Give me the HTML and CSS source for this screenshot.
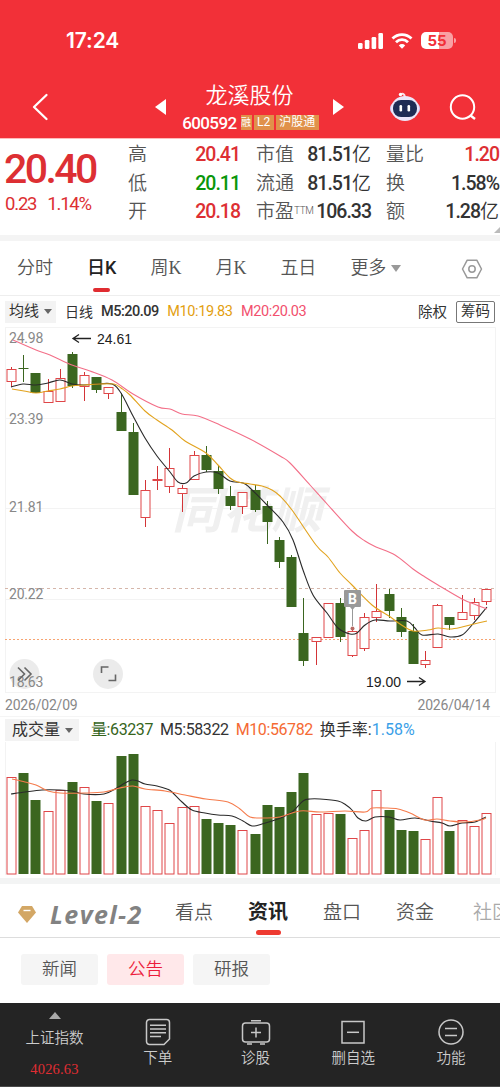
FILE: index.html
```
<!DOCTYPE html>
<html lang="zh-CN">
<head>
  <meta charset="UTF-8" />
  <meta name="viewport" content="width=device-width, initial-scale=1.0"/>
  <title>龙溪股份 600592</title>
  <link rel="stylesheet" href="styles.css">
</head>
<body>
  <header>
    <div class="status">
      <span class="time">17:24</span>
      <div class="status-icons">
        <svg width="26" height="16" viewBox="0 0 26 16" fill="#fff">
          <rect x="0" y="10" width="4.6" height="6" rx="1.3"/>
          <rect x="6.8" y="7" width="4.6" height="9" rx="1.3"/>
          <rect x="13.6" y="4" width="4.6" height="12" rx="1.3"/>
          <rect x="20.4" y="0" width="4.6" height="16" rx="1.3"/>
        </svg>
        <svg class="wifi" width="22" height="16" viewBox="0 0 22 16" fill="none" stroke="#fff" stroke-width="2.8">
          <path d="M1.5 5.5a13.4 13.4 0 0 1 19 0"/>
          <path d="M5 9.2a8.5 8.5 0 0 1 12 0"/>
          <path d="M11 15.8l-3.2-3.4a4.6 4.6 0 0 1 6.4 0z" fill="#fff" stroke="none"/>
        </svg>
        <span class="battery">55</span>
      </div>
    </div>
    <div class="titlebar">
      <svg class="back" width="18" height="28" viewBox="0 0 18 28" fill="none" stroke="#fff" stroke-width="2.3" stroke-linecap="round" stroke-linejoin="round"><path d="M14.5 2L2 14l12.500 12"/></svg>
      <svg class="prev" width="11" height="16" viewBox="0 0 11 16" fill="#fff"><path d="M11 0v16L0 8z"/></svg>
      <div class="stock">
        <div class="stock-name">龙溪股份</div>
        <div class="stock-code"><span>600592</span><i class="tag small">融</i><i class="tag">L2</i><i class="tag">沪股通</i></div>
      </div>
      <svg class="next" width="11" height="16" viewBox="0 0 11 16" fill="#fff"><path d="M0 0v16l11-8z"/></svg>
      <svg class="robot" width="32" height="30" viewBox="0 0 32 30">
        <path d="M11 3q4-3 5 2" fill="none" stroke="#fbdde6" stroke-width="2"/>
        <circle cx="11.500" cy="2.500" r="1.700" fill="#fff"/>
        <rect x="1" y="11" width="30" height="11" rx="5" fill="#cfc4ef"/>
        <ellipse cx="16" cy="16.500" rx="14" ry="12.500" fill="#ece6fa"/>
        <rect x="4" y="8" width="24" height="17" rx="8" fill="#1f2c55"/>
        <rect x="10.500" y="13" width="2.600" height="6.500" rx="1.200" fill="#fff"/>
        <rect x="18.500" y="13" width="2.600" height="6.500" rx="1.200" fill="#fff"/>
      </svg>
      <svg class="search" width="28" height="28" viewBox="0 0 28 28" fill="none" stroke="#fff" stroke-width="2"><circle cx="13.500" cy="13" r="11.700"/><path d="M21.500 21.500l4.500 3.500" stroke-width="2.400"/></svg>
    </div>
  </header>

  <section class="quote">
    <div class="price">
      <div class="price-now">20.40</div>
      <div class="price-change"><span>0.23</span><span>1.14%</span></div>
    </div>
    <dl>
      <dt>高</dt><dd class="red">20.41</dd>
      <dt>低</dt><dd class="green">20.11</dd>
      <dt>开</dt><dd class="red">20.18</dd>
    </dl>
    <dl>
      <dt>市值</dt><dd>81.51<b>亿</b></dd>
      <dt>流通</dt><dd>81.51<b>亿</b></dd>
      <dt>市盈<small>TTM</small></dt><dd>106.33</dd>
    </dl>
    <dl>
      <dt>量比</dt><dd class="red">1.20</dd>
      <dt>换</dt><dd>1.58%</dd>
      <dt>额</dt><dd>1.28<b>亿</b></dd>
    </dl>
    <i class="corner"></i>
  </section>

  <nav class="periods">
    <span>分时</span>
    <span class="active">日K</span>
    <span>周<em>K</em></span>
    <span>月<em>K</em></span>
    <span>五日</span>
    <span class="more">更多<i class="caret"></i></span>
    <svg class="settings" width="22" height="20" viewBox="0 0 22 20" fill="none" stroke="#999" stroke-width="1.500" stroke-linejoin="round"><path d="M6.200 1.200h9.600L20.500 10l-4.700 8.800H6.200L1.500 10z"/><circle cx="11" cy="10" r="3.200"/></svg>
  </nav>

  <div class="ma-row">
    <span class="picker">均线<i class="caret"></i></span>
    <span class="line-name">日线</span>
    <span class="num">M5:20.09</span>
    <span class="num yellow">M10:19.83</span>
    <span class="num pink">M20:20.03</span>
    <span class="rights">除权</span>
    <span class="chips-btn">筹码</span>
  </div>

  <svg id="kline" class="kline" width="500" height="366" viewBox="0 327 500 366"></svg>

  <div class="dates"><span>2026/02/09</span><span>2026/04/14</span></div>

  <div class="vol-row">
    <span class="picker">成交量<i class="caret"></i></span>
    <span class="num dgreen">量:63237</span>
    <span class="num">M5:58322</span>
    <span class="num orange">M10:56782</span>
    <span class="num turnover">换手率:<b>1.58%</b></span>
  </div>

  <svg id="volume" class="volume" width="500" height="136" viewBox="0 742 500 136"></svg>

  <nav class="sections">
    <svg width="18" height="17" viewBox="0 0 18 17"><path d="M4 0h10l4 6.500L9 17 0 6.500z" fill="#d3a765"/><path d="M5.500 4.500h7" stroke="#fff" stroke-width="1.400"/></svg>
    <span class="level2">Level-2</span>
    <span>看点</span>
    <span class="active">资讯</span>
    <span>盘口</span>
    <span>资金</span>
    <span class="cut">社区</span>
  </nav>

  <div class="filters">
    <span>新闻</span>
    <span class="active">公告</span>
    <span>研报</span>
  </div>

  <footer>
    <div class="index">
      <i class="up"></i>
      <span>上证指数</span>
      <b>4026.63</b>
    </div>
    <div class="action">
      <svg width="26" height="28" viewBox="0 0 26 28" fill="none" stroke="#c8c8c8" stroke-width="1.500"><path d="M4.500 1.500h17a3 3 0 0 1 3 3V21l-5.500 5.500H4.500a3 3 0 0 1-3-3v-19a3 3 0 0 1 3-3z"/><path d="M5 7.200h16M5 11h16M5 14.800h16M5 18.600h11"/></svg>
      <span>下单</span>
    </div>
    <div class="action">
      <svg width="30" height="28" viewBox="0 0 30 28" fill="none" stroke="#c8c8c8" stroke-width="1.500"><rect x="1.500" y="5" width="27" height="19" rx="3"/><path d="M10 2.700h10M6 26h5M19 26h5M15 9.500v10M10 14.500h10"/></svg>
      <span>诊股</span>
    </div>
    <div class="action">
      <svg width="26" height="28" viewBox="0 0 26 28" fill="none" stroke="#c8c8c8" stroke-width="1.500"><rect x="2" y="3.500" width="22" height="21.500"/><path d="M7 14.300h12"/></svg>
      <span>删自选</span>
    </div>
    <div class="action">
      <svg width="28" height="28" viewBox="0 0 28 28" fill="none" stroke="#c8c8c8" stroke-width="1.500"><circle cx="14" cy="14" r="12"/><path d="M8 10.500h12M8 17.500h12"/></svg>
      <span>功能</span>
    </div>
  </footer>

  <script src="chart.js"></script>
</body>
</html>
```
FILE: styles.css
```
* {
  box-sizing: border-box;
}
body {
  margin: 0;
  width: 500px;
  height: 1087px;
  overflow: hidden;
  display: flex;
  flex-direction: column;
  background: #fff;
  color: #333;
  font-family: Roboto, 'Noto Sans CJK SC', sans-serif;
}
body > * {
  flex-shrink: 0;
}
i, em {
  font-style: normal;
}
svg {
  display: block;
}

/* header */
header {
  height: 138px;
  background: #f23038;
  color: #fff;
}
.status {
  height: 81px;
  padding: 0 47px 0 66px;
  display: flex;
  align-items: center;
  justify-content: space-between;
}
.time {
  font-family: Inter, sans-serif;
  font-size: 21px;
  font-weight: 600;
  letter-spacing: -0.1px;
}
.status-icons {
  display: flex;
  align-items: center;
}
.wifi {
  margin: 0 8px 0 7px;
}
.battery {
  position: relative;
  width: 32px;
  height: 17px;
  border-radius: 5px;
  background: linear-gradient(90deg, #fff 55%, #f9a0a3 55%);
  color: #f23038;
  font: 700 15px/17px Inter, sans-serif;
  text-align: center;
}
.battery::after {
  content: "";
  position: absolute;
  right: -3px;
  top: 6px;
  width: 2px;
  height: 5px;
  border-radius: 0 2px 2px 0;
  background: #f9a0a3;
}
.titlebar {
  height: 57px;
  padding-left: 32px;
  display: flex;
  align-items: center;
}
.back {
  margin-top: -6px;
}
.prev {
  margin: -5px 0 0 105px;
}
.stock {
  width: 167px;
  margin-top: -2px;
  text-align: center;
}
.stock-name {
  font-size: 22px;
  line-height: 28px;
  font-weight: 350;
}
.stock-code {
  display: flex;
  align-items: center;
  justify-content: center;
  height: 26px;
  gap: 2px;
  padding-left: 2px;
  font-size: 17px;
  font-weight: 500;
  letter-spacing: -0.6px;
}
.stock-code span {
  margin-right: 2px;
}
.tag {
  height: 15px;
  padding: 0 3.5px;
  background: #e0914a;
  font-size: 12px;
  line-height: 15px;
  font-weight: 400;
  letter-spacing: 0;
}
.tag.small {
  padding: 0 0.5px;
  font-size: 10px;
}
.next {
  margin-top: -5px;
}
.robot {
  margin: -6px 0 0 45px;
}
.search {
  margin: -3px 0 0 28px;
}

/* quote */
.quote {
  position: relative;
  height: 103px;
  padding: 2px 1px 0 5px;
  display: grid;
  grid-template-columns: 123px 112px 16px 115px 15px 113px;
  align-content: start;
  border-top: 1px solid #fbb;
  border-bottom: 6px solid #f4f4f4;
}
.price {
  color: #dd2f33;
}
.price-now {
  margin: 5px 0 0 -1px;
  font-size: 41px;
  line-height: 46px;
  font-weight: 500;
  letter-spacing: -2.6px;
}
.price-change {
  display: flex;
  gap: 11px;
  font-size: 18.5px;
  line-height: 24px;
  letter-spacing: -1.2px;
}
dl {
  margin: 0;
  display: grid;
  grid-template-columns: 38px 1fr;
  grid-auto-rows: 28.5px;
  align-items: center;
}
.quote dl:nth-of-type(2) {
  grid-column: 4;
}
.quote dl:nth-of-type(3) {
  grid-column: 6;
}
dt {
  color: #555;
  font-size: 19px;
  line-height: 28px;
  font-weight: 350;
  white-space: nowrap;
}
dt small {
  font-size: 10px;
  line-height: 1;
  vertical-align: 4px;
  letter-spacing: -0.4px;
}
dd {
  margin: 0;
  text-align: right;
  font-size: 19.5px;
  line-height: 28px;
  font-weight: 500;
  letter-spacing: -1px;
  white-space: nowrap;
}
dd b {
  font-weight: 350;
  font-size: 19px;
  line-height: 1;
  letter-spacing: 0;
}
.red {
  color: #dd2f33;
}
.green {
  color: #0a960a;
}
.corner {
  position: absolute;
  right: 0;
  bottom: 2px;
  border-left: 6px solid transparent;
  border-bottom: 6px solid #bbb;
}

/* period tabs */
.periods {
  height: 55px;
  padding: 0 17px 4px;
  display: flex;
  align-items: center;
  border-bottom: 1px solid #eee;
  color: #555;
  font-size: 18px;
  font-weight: 350;
}
.periods span {
  position: relative;
  margin-right: 34px;
  white-space: nowrap;
}
.periods em {
  font-family: 'Liberation Serif', serif;
}
.periods .active {
  color: #222;
  font-weight: 500;
}
.periods .active::after {
  content: "";
  position: absolute;
  left: 6px;
  bottom: -13px;
  width: 17px;
  height: 4px;
  border-radius: 2px;
  background: #e02c31;
}
.periods .more {
  margin-right: 0;
}
.settings {
  margin: 5px 0 0 auto;
}
.caret {
  display: inline-block;
  margin-left: 5px;
  vertical-align: 2px;
  border: 4px solid transparent;
  border-top: 5px solid #666;
  border-bottom: 0;
}
.more .caret {
  border-width: 7px 5px 0;
  border-top-color: #999;
}

/* indicator rows */
.ma-row, .vol-row {
  display: flex;
  align-items: center;
  padding-left: 5px;
  font-size: 15px;
  white-space: nowrap;
}
.ma-row {
  height: 31px;
}
.picker {
  height: 22px;
  padding: 0 4px;
  background: #f3f3f3;
  line-height: 21px;
}
.line-name {
  margin: -1px 8px 0 9px;
  font-size: 14px;
}
.ma-row .num {
  margin-right: 8.5px;
  font-size: 14.5px;
  font-weight: 500;
  letter-spacing: -0.5px;
}
.ma-row .yellow, .ma-row .pink {
  font-weight: 400;
  letter-spacing: -0.4px;
}
.yellow {
  color: #e3a010;
}
.pink {
  color: #f2506e;
}
.rights {
  margin: -2px 0 0 auto;
  font-size: 14.5px;
}
.chips-btn {
  margin: 0 5px 0 9px;
  padding: 0 4px;
  height: 22px;
  border: 1px solid #777;
  border-radius: 2px;
  font-size: 14.5px;
  line-height: 20px;
}
.dates {
  height: 24px;
  padding: 0 10px 0 5px;
  display: flex;
  justify-content: space-between;
  border-bottom: 1px solid #f5f5f5;
  color: #888;
  font-size: 14px;
  line-height: 25px;
  letter-spacing: -0.2px;
}
.vol-row {
  height: 25px;
}
.vol-row .picker {
  width: 74px;
  padding-left: 7px;
  font-size: 16px;
}
.vol-row .num {
  margin-left: 7px;
  font-size: 16px;
  line-height: 24px;
  letter-spacing: -0.4px;
}
.vol-row .num.dgreen {
  margin-left: 12px;
  color: #36651c;
}
.vol-row .orange {
  color: #f56a34;
}
.vol-row .turnover {
  letter-spacing: 0;
}
.turnover b {
  color: #3a9fe8;
  font-weight: 400;
}

/* charts */
.grid {
  stroke: #f3f3f3;
  fill: none;
}
.up-bar {
  fill: #fff;
  stroke: #df4648;
}
.up-wick {
  stroke: #d33437;
}
.down-bar {
  fill: #3b6620;
}
.down-wick {
  stroke: #3b6620;
}
.line {
  fill: none;
  stroke-width: 1.1;
}
.line.m5 {
  stroke: #2a2a2a;
}
.line.m10 {
  stroke: #e2a31e;
}
.line.m20 {
  stroke: #f36f88;
}
.line.v10 {
  stroke: #f57b4c;
}
.dash-a {
  stroke: #d5b6aa;
  stroke-dasharray: 3 3;
}
.dash-b {
  stroke: #f6a472;
  stroke-dasharray: 2 2;
}
.axis {
  fill: #888;
  font-size: 14px;
  letter-spacing: -0.2px;
}
.peak {
  fill: #222;
  font-size: 14px;
  font-family: 'Liberation Sans', sans-serif;
}
.arrow {
  fill: none;
  stroke: #222;
  stroke-width: 1.3;
}
.watermark {
  fill: #f0f0f0;
  font-size: 50px;
  font-weight: 700;
  font-style: italic;
}
.round {
  fill: #e8e8e8;
  fill-opacity: 0.85;
}
.glyph {
  fill: none;
  stroke: #666;
  stroke-width: 1.6;
}
.buy-box {
  fill: #999;
}
.buy-text {
  fill: #fff;
  font-size: 14px;
  font-weight: 700;
}

/* bottom sections */
.sections {
  height: 60px;
  padding: 0 0 1px 18px;
  display: flex;
  align-items: center;
  border-top: 6px solid #f3f4f4;
  border-bottom: 1px solid #ddd;
  color: #555;
  font-size: 19px;
  font-weight: 350;
  white-space: nowrap;
  overflow: hidden;
}
.sections svg {
  flex-shrink: 0;
  margin-top: 8px;
}
.sections span {
  position: relative;
  flex-shrink: 0;
  margin-right: 35px;
}
.sections .level2 {
  width: 92px;
  margin: 8px 33px 0 14px;
  color: #828282;
  font: italic 700 25px/30px 'Open Sans', sans-serif;
  letter-spacing: 1.4px;
}
.sections .active {
  color: #222;
  font-size: 20px;
  font-weight: 700;
}
.sections .active::after {
  content: "";
  position: absolute;
  left: 8px;
  bottom: -10px;
  width: 25px;
  height: 5px;
  border-radius: 3px;
  background: #ee3a31;
}
.sections .cut {
  margin: 0 0 0 4px;
  color: #aaa;
}
.filters {
  height: 65px;
  padding: 16px 21px;
  display: flex;
  gap: 9px;
}
.filters span {
  width: 77px;
  height: 31px;
  border-radius: 3px;
  background: #f5f5f5;
  color: #555;
  font-size: 17.5px;
  line-height: 31px;
  font-weight: 350;
  text-align: center;
}
.filters .active {
  background: #ffe8ea;
  color: #ec1c3c;
}
footer {
  height: 84px;
  display: grid;
  grid-template-columns: 109px repeat(4, 97.7px);
  background: #242424;
  color: #ccc;
  border-bottom: 1px solid #4a4a4a;
}
.index, .action {
  display: flex;
  flex-direction: column;
  align-items: center;
}
.up {
  margin-top: 9px;
  border: 6px solid transparent;
  border-top: 0;
  border-bottom: 7px solid #aaa;
}
.index span {
  margin-top: 10px;
  font-size: 14.5px;
  line-height: 20px;
  font-weight: 350;
}
.index b {
  margin-top: 10px;
  color: #e02d33;
  font: 14.5px/20px 'Liberation Serif', serif;
  letter-spacing: 0.2px;
}
.action {
  padding-top: 15px;
}
.action span {
  margin-top: 3px;
  font-size: 14.5px;
  line-height: 20px;
  font-weight: 350;
}
```
FILE: chart.js
```
// [high, body top, body bottom, low, rising, volume top]
const bars = [
  [367, 369, 381, 387, 1, 777], [355, 368, 369, 382, 0, 773], [373, 373, 393, 393, 0, 800],
  [379, 391, 402, 402, 1, 811], [369, 378, 401, 401, 1, 790], [352, 354, 386, 388, 0, 782],
  [372, 375, 386, 401, 1, 787], [377, 377, 390, 393, 0, 801], [387, 387, 393, 399, 1, 803],
  [393, 412, 431, 431, 0, 756], [423, 432, 495, 495, 0, 754], [480, 490, 517, 527, 1, 806],
  [466, 479, 480, 490, 1, 810], [448, 468, 486, 493, 1, 823], [485, 488, 493, 512, 1, 807],
  [451, 455, 479, 479, 1, 806], [446, 455, 470, 472, 0, 819], [466, 471, 489, 494, 0, 823],
  [486, 496, 506, 510, 0, 825], [492, 492, 506, 514, 1, 830], [485, 490, 510, 512, 0, 834],
  [501, 506, 522, 544, 0, 805], [537, 540, 562, 568, 0, 807], [555, 557, 607, 607, 0, 792],
  [598, 633, 661, 666, 0, 773], [637, 637, 641, 665, 1, 814], [603, 603, 637, 637, 1, 813],
  [598, 603, 637, 642, 0, 814], [627, 631, 655, 657, 1, 838], [613, 617, 648, 651, 1, 830],
  [584, 611, 617, 622, 1, 790], [589, 594, 611, 618, 0, 810], [608, 617, 632, 637, 0, 830],
  [624, 631, 664, 664, 0, 831], [651, 660, 664, 668, 1, 839], [604, 605, 647, 647, 1, 797],
  [617, 617, 625, 630, 0, 831], [595, 612, 619, 619, 1, 820], [598, 602, 615, 620, 1, 826],
  [589, 589, 601, 605, 1, 813]
];

const m5 = [[11,387],[23,384],[36,385],[48,383],[60,380],[72,384],[84,385],[97,384],[112,384],[121,393],[133,416],[145,438],[157,456],[170,472],[178,482],[186,483],[194,476],[206,472],[218,473],[230,481],[243,483],[250,488],[267,505],[283,522],[293,540],[303,570],[313,595],[327,613],[338,628],[350,634],[357,633],[365,625],[375,620],[390,621],[407,621],[415,628],[422,635],[438,634],[450,637],[462,635],[472,625],[487,607]];
const m10 = [[12,389],[24,391],[36,393],[48,391],[60,389],[72,386],[84,385],[100,384],[114,384],[121,388],[130,395],[145,411],[157,420],[172,430],[185,441],[206,453],[218,465],[230,478],[238,482],[250,484],[262,486],[272,490],[280,496],[292,510],[316,545],[328,557],[340,573],[352,585],[372,605],[389,616],[400,624],[413,631],[428,630],[438,628],[450,629],[462,627],[474,624],[487,621]];
const m20 = [[13,340],[36,350],[50,355],[72,365],[90,371],[112,380],[133,394],[158,407],[170,409],[182,414],[198,416],[220,425],[250,439],[280,456],[290,463],[310,485],[328,505],[352,531],[365,541],[376,547],[395,555],[413,569],[425,577],[438,585],[462,599],[474,604],[487,609]];
const v5 = [[11,794],[25,792],[42,790],[60,790],[72,791],[84,794],[104,794],[115,789],[125,783],[132,780],[138,781],[145,784],[157,786],[167,789],[172,792],[182,802],[192,810],[205,813],[218,815],[232,816],[243,821],[252,826],[262,824],[278,819],[292,812],[303,801],[310,799],[320,799],[338,801],[346,805],[352,810],[358,818],[366,821],[375,817],[389,817],[400,820],[415,818],[430,821],[442,823],[450,826],[462,823],[475,822],[486,817]];
const v10 = [[12,779],[25,782],[36,785],[48,791],[60,793],[84,793],[104,792],[120,788],[133,786],[145,789],[165,791],[185,795],[206,799],[228,802],[240,809],[250,817],[265,818],[280,817],[300,811],[320,812],[345,811],[365,812],[372,808],[385,808],[398,809],[410,813],[425,820],[437,819],[450,821],[465,822],[480,820],[486,818]];

const centre = i => Math.round(11 + i * 12.18) + 0.5;

// smooth line through the points
function curve(p, cls) {
  let d = `M${p[0]}`;
  for (let i = 0; i < p.length - 1; i++) {
    const a = p[i - 1] || p[i], b = p[i], c = p[i + 1], e = p[i + 2] || c;
    d += `C${b[0] + (c[0] - a[0]) / 6} ${b[1] + (c[1] - a[1]) / 6} ${c[0] - (e[0] - b[0]) / 6} ${c[1] - (e[1] - b[1]) / 6} ${c[0]} ${c[1]}`;
  }
  return `<path class="line ${cls}" d="${d}"/>`;
}

function body(x, top, bottom, up) {
  return up
    ? `<rect class="up-bar" x="${x - 4.5}" y="${top + 0.5}" width="9" height="${bottom - top}"/>`
    : `<rect class="down-bar" x="${x - 5}" y="${top}" width="10" height="${bottom - top}"/>`;
}

let k = `<path class="grid" d="M5.5 327.500H495.500V693M5.500 327V693M5 418.500H495M5 508.500H495M5 599.500H495M5 692.500H495"/>
  <text class="watermark" x="172" y="528">同花顺</text>
  <path class="dash-a" d="M5 588.500H495"/><path class="dash-b" d="M5 639.500H495"/>
  <circle class="round" cx="24.500" cy="674" r="15"/><circle class="round" cx="108" cy="674" r="15"/>
  <text class="axis" x="9" y="343">24.98</text>
  <text class="axis" x="9" y="424">23.39</text>
  <text class="axis" x="9" y="512">21.81</text>
  <text class="axis" x="9" y="599">20.22</text>
  <text class="axis" x="9" y="687">18.63</text>`;
let v = '<path class="grid" d="M5.500 742V875M495.500 742V875"/>';

bars.forEach(([high, top, bottom, low, up, vol], i) => {
  const x = centre(i);
  k += `<path class="${up ? 'up' : 'down'}-wick" d="M${x} ${high}V${low}"/>` + body(x, top, bottom, up);
  v += body(x, vol, up ? 873.5 : 874, up);
});

k += curve(m5, 'm5') + curve(m10, 'm10') + curve(m20, 'm20');
k += `<path class="arrow" d="M91 338.500H73M79 334.500L73 338.500L79 342.500"/><text class="peak" x="97" y="344">24.61</text>
  <text class="peak" x="366" y="687">19.00</text><path class="arrow" d="M407 681.500H425M419 677.500L425 681.500L419 685.500"/>
  <path d="M352.500 608V626" stroke="#999"/><circle cx="352.500" cy="628.500" r="2" fill="#b86a64"/>
  <path class="buy-box" d="M345 590h15a1 1 0 0 1 1 1v15a1 1 0 0 1-1 1h-5l-2.500 3-2.500-3h-5a1 1 0 0 1-1-1v-15a1 1 0 0 1 1-1z"/>
  <text class="buy-text" x="348" y="604">B</text>
  <path class="glyph" d="M18 667.500l6.500 6.500-6.500 6.500M24.500 667.500l6.500 6.500-6.500 6.500"/>
  <path class="glyph" d="M101.500 673v-6h7M115.500 674.500v6h-7"/>`;
v += curve(v5, 'm5') + curve(v10, 'v10');

document.getElementById('kline').innerHTML = k;
document.getElementById('volume').innerHTML = v;
```
